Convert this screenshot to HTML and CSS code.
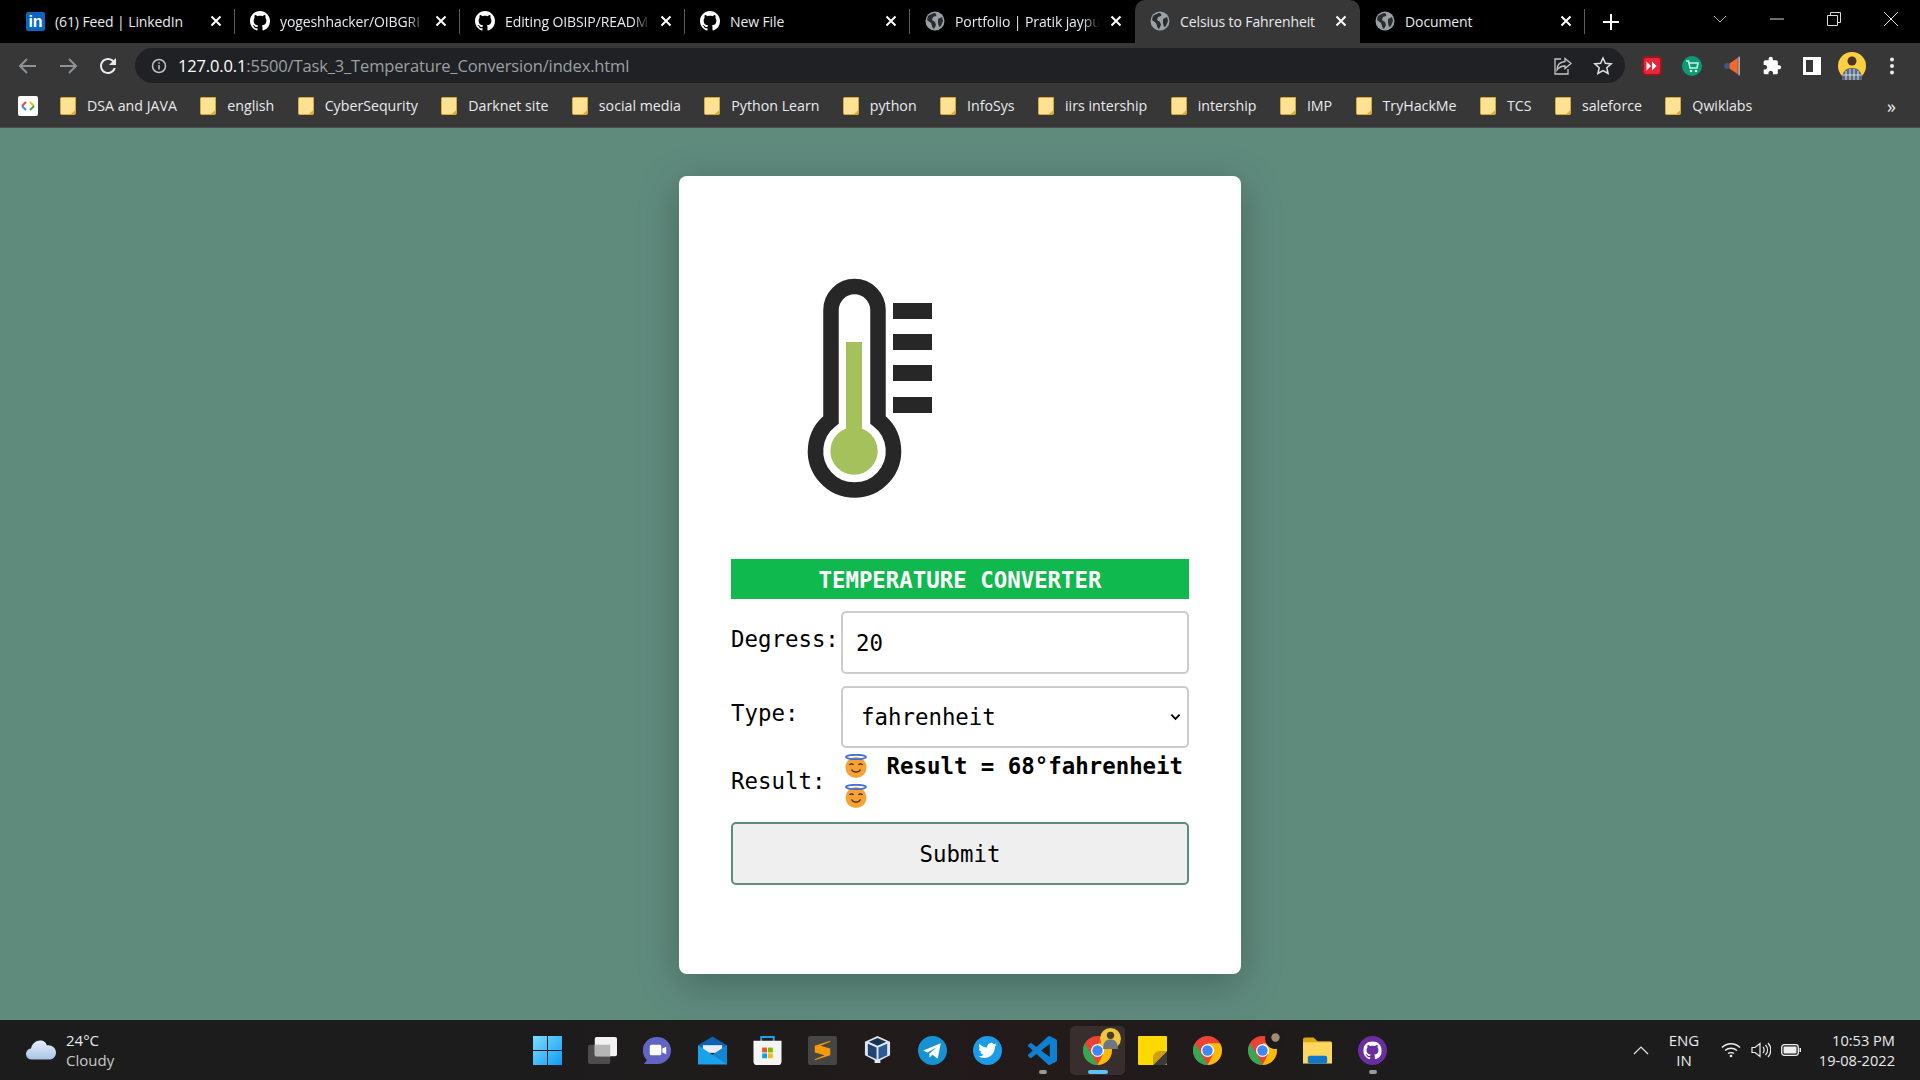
FILE: index.html
```html
<!DOCTYPE html>
<html lang="en">
<head>
  <meta charset="UTF-8">
  <title>Celsius to Fahrenheit</title>
  <link rel="stylesheet" href="styles.css">
</head>
<body>
  <svg class="defs" width="0" height="0">
    <symbol id="gh" viewBox="0 0 16 16"><path fill="currentColor" d="M8 0C3.58 0 0 3.58 0 8c0 3.54 2.29 6.53 5.47 7.59.4.07.55-.17.55-.38 0-.19-.01-.82-.01-1.49-2.01.37-2.53-.49-2.69-.94-.09-.23-.48-.94-.82-1.13-.28-.15-.68-.52-.01-.53.63-.01 1.08.58 1.23.82.72 1.21 1.87.87 2.33.66.07-.52.28-.87.51-1.07-1.78-.2-3.64-.89-3.64-3.95 0-.87.31-1.59.82-2.15-.08-.2-.36-1.02.08-2.12 0 0 .67-.21 2.2.82.64-.18 1.32-.27 2-.27.68 0 1.36.09 2 .27 1.53-1.04 2.2-.82 2.2-.82.44 1.1.16 1.92.08 2.12.51.56.82 1.27.82 2.15 0 3.07-1.87 3.75-3.65 3.95.29.25.54.73.54 1.48 0 1.07-.01 1.93-.01 2.2 0 .21.15.46.55.38A8.013 8.013 0 0016 8c0-4.42-3.58-8-8-8z"/></symbol>
    <symbol id="globe" viewBox="0 0 20 20"><circle cx="10" cy="10" r="9.500" fill="#9aa0a6"/><path fill="#2b2c2e" d="M3 5c2-1 4-3 7-3 1 1 2 2 1 3L8 6 7 9l3 2 1 3-2 4c-2-1-2-4-3-6L2 9zM13 8l4-2 1 4-2 5-2 1-1-4z"/></symbol>
    <symbol id="x" viewBox="0 0 16 16"><path stroke="#fff" stroke-width="2" d="M3.500 3.500l9 9M12.500 3.500l-9 9"/></symbol>
    <symbol id="folder" viewBox="0 0 16 18"><path fill="#fde293" stroke="#d9a93a" d="M.5 1.500a1 1 0 011-1h9l5 0v16a1 1 0 01-1 1h-13a1 1 0 01-1-1z"/><path fill="#d9a93a" d="M11 17l4.500-4v4z"/></symbol>
    <symbol id="angel" viewBox="0 0 22 24"><circle cx="11" cy="13.500" r="10.500" fill="#f6a235"/><ellipse cx="11" cy="3" rx="10" ry="2.200" fill="none" stroke="#3f6fd8" stroke-width="1.800"/><path fill="none" stroke="#3d2a14" stroke-width="1.300" d="M4.500 11c1-1.500 3-1.500 4 0M13.500 11c1-1.500 3-1.500 4 0M6.500 15.500c2 3.500 7 3.500 9 0"/></symbol>
    <symbol id="chrome" viewBox="0 0 28 28"><circle cx="14" cy="14" r="14" fill="#ea4335"/><path fill="#34a853" d="M1.900 7L8 17.500 14.500 28 14 28A14 14 0 011.900 7z"/><path fill="#fbbc04" d="M14 28a14 14 0 0012.100-21H14l5.500 10.500z"/><circle cx="14" cy="14" r="6.300" fill="#fff"/><circle cx="14" cy="14" r="5" fill="#4285f4"/></symbol>
  </svg>

  <header class="tabstrip">
    <div class="tab">
      <span class="linkedin">in</span>
      <span class="tab-title">(61) Feed | LinkedIn</span>
      <svg class="tab-x"><use href="#x"/></svg>
    </div>
    <div class="tab">
      <svg class="fav"><use href="#gh"/></svg>
      <span class="tab-title fade">yogeshhacker/OIBGRI</span>
      <svg class="tab-x"><use href="#x"/></svg>
    </div>
    <div class="tab">
      <svg class="fav"><use href="#gh"/></svg>
      <span class="tab-title fade">Editing OIBSIP/READM</span>
      <svg class="tab-x"><use href="#x"/></svg>
    </div>
    <div class="tab">
      <svg class="fav"><use href="#gh"/></svg>
      <span class="tab-title">New File</span>
      <svg class="tab-x"><use href="#x"/></svg>
    </div>
    <div class="tab no-sep">
      <svg class="fav"><use href="#globe"/></svg>
      <span class="tab-title fade">Portfolio | Pratik jaypu</span>
      <svg class="tab-x"><use href="#x"/></svg>
    </div>
    <div class="tab active">
      <svg class="fav"><use href="#globe"/></svg>
      <span class="tab-title">Celsius to Fahrenheit</span>
      <svg class="tab-x"><use href="#x"/></svg>
    </div>
    <div class="tab">
      <svg class="fav"><use href="#globe"/></svg>
      <span class="tab-title">Document</span>
      <svg class="tab-x"><use href="#x"/></svg>
    </div>
    <svg class="new-tab" viewBox="0 0 16 16"><path stroke="#fff" stroke-width="2" d="M8 0v16M0 8h16"/></svg>
    <div class="window-btns">
      <svg viewBox="0 0 14 14"><path fill="none" stroke="#aaa" d="M1 4l6 6 6-6"/></svg>
      <svg viewBox="0 0 14 14"><path stroke="#ddd" d="M0 7h14"/></svg>
      <svg viewBox="0 0 14 14"><path fill="none" stroke="#ddd" d="M.5 3.500h10v10h-10zM3.500 3.500v-3h10v10h-3"/></svg>
      <svg viewBox="0 0 14 14"><path stroke="#ddd" d="M0 0l14 14M14 0L0 14"/></svg>
    </div>
  </header>

  <div class="toolbar">
    <svg class="tool" viewBox="0 0 24 24"><path fill="none" stroke="#8f9194" stroke-width="2" d="M20 12H5M11 5l-7 7 7 7"/></svg>
    <svg class="tool" viewBox="0 0 24 24"><path fill="none" stroke="#8f9194" stroke-width="2" d="M4 12h15M13 5l7 7-7 7"/></svg>
    <svg class="tool" viewBox="0 0 24 24"><path fill="#e8eaed" d="M17.650 6.350C16.200 4.900 14.210 4 12 4c-4.420 0-7.990 3.580-7.990 8s3.570 8 7.990 8c3.730 0 6.840-2.550 7.730-6h-2.080c-.82 2.330-3.040 4-5.650 4-3.310 0-6-2.690-6-6s2.690-6 6-6c1.660 0 3.140.69 4.220 1.780L13 11h7V4l-2.350 2.350z"/></svg>
    <div class="omnibox">
      <svg class="info" viewBox="0 0 16 16"><circle cx="8" cy="8" r="6.500" fill="none" stroke="#bdc1c6" stroke-width="1.500"/><path stroke="#bdc1c6" stroke-width="1.500" d="M8 7v4.500M8 4.300v1.500"/></svg>
      <span class="url"><b>127.0.0.1</b>:5500/Task_3_Temperature_Conversion/index.html</span>
      <svg class="omni-icon" viewBox="0 0 20 20"><path fill="none" stroke="#c4c7c5" stroke-width="1.300" d="M8 3H2v15h13v-5M12 2.500l6 5-6 5V10c-4 0-6 1-8 4 0-5 3-8 8-8.500z"/></svg>
      <svg class="omni-icon" viewBox="0 0 20 20"><path fill="none" stroke="#e0e0e0" stroke-width="1.500" d="M10 2l2.400 5.300 5.800.6-4.400 3.900 1.300 5.700-5.100-3-5.100 3 1.300-5.700L1.800 7.900l5.800-.6z"/></svg>
    </div>
    <div class="ext-btn"><svg viewBox="0 0 20 20"><rect width="18" height="18" x="1" y="1" rx="3" fill="#e8263a" stroke="#8e1c1c" stroke-width="2"/><path fill="#fff" d="M4.500 5.500l4.500 4.500-4.500 4.500zM10 5.500l4.500 4.500-4.500 4.500z"/></svg></div>
    <div class="ext-btn"><svg viewBox="0 0 20 20"><circle cx="10" cy="10" r="10" fill="#0b9a76"/><path fill="none" stroke="#c9f2e2" stroke-width="1.600" d="M4 5h2.500l1.500 7h7l1-5H7"/><circle cx="9" cy="15" r="1.300" fill="#c9f2e2"/><circle cx="14" cy="15" r="1.300" fill="#c9f2e2"/></svg></div>
    <div class="ext-btn"><svg viewBox="0 0 20 24"><circle cx="4" cy="12" r="3.500" fill="#3c5a80"/><path fill="#f4682c" d="M7 9l10-7v20l-10-7z"/><path stroke="#ddd" stroke-width="1.500" d="M18.500 1v22"/></svg></div>
    <div class="ext-btn"><svg viewBox="0 0 24 24"><path fill="#fff" d="M20.500 11H19V7c0-1.100-.9-2-2-2h-4V3.500C13 2.120 11.880 1 10.500 1S8 2.120 8 3.500V5H4c-1.100 0-1.990.9-1.990 2v3.800H3.500c1.490 0 2.700 1.210 2.700 2.700s-1.210 2.700-2.700 2.700H2V20c0 1.100.9 2 2 2h3.800v-1.500c0-1.490 1.210-2.700 2.700-2.700 1.490 0 2.700 1.210 2.700 2.700V22H17c1.100 0 2-.9 2-2v-4h1.500c1.380 0 2.500-1.120 2.500-2.500S21.880 11 20.500 11z"/></svg></div>
    <div class="ext-btn"><svg viewBox="0 0 20 20"><path fill="#fff" d="M1 1h18v18H1z"/><path fill="#373737" d="M4 4h7v12H4z"/></svg></div>
    <div class="ext-btn"><svg class="avatar" viewBox="0 0 28 28"><circle cx="14" cy="14" r="14" fill="#fbcf3f"/><circle cx="14" cy="9" r="4.500" fill="#4a3326"/><path fill="#5a6a80" d="M4 28c0-9 4-12 10-12s10 3 10 12z"/><path stroke="#d8dde5" d="M8 19v9M12 17v11M16 17v11M20 19v9M5 23h18"/></svg></div>
    <div class="ext-btn"><svg viewBox="0 0 20 20"><circle cx="10" cy="3.500" r="2" fill="#e8eaed"/><circle cx="10" cy="10" r="2" fill="#e8eaed"/><circle cx="10" cy="16.500" r="2" fill="#e8eaed"/></svg></div>
  </div>

  <nav class="bookmarks">
    <svg class="apps" viewBox="0 0 20 20"><rect width="20" height="20" rx="2" fill="#fff"/><path fill="none" stroke="#ea4335" stroke-width="2" d="M8 6l-4 4"/><path fill="none" stroke="#4285f4" stroke-width="2" d="M4 10l4 4"/><path fill="none" stroke="#fbbc04" stroke-width="2" d="M12 6l4 4"/><path fill="none" stroke="#34a853" stroke-width="2" d="M16 10l-4 4"/></svg>
    <a class="bm"><svg><use href="#folder"/></svg>DSA and JAVA</a>
    <a class="bm"><svg><use href="#folder"/></svg>english</a>
    <a class="bm"><svg><use href="#folder"/></svg>CyberSequrity</a>
    <a class="bm"><svg><use href="#folder"/></svg>Darknet site</a>
    <a class="bm"><svg><use href="#folder"/></svg>social media</a>
    <a class="bm"><svg><use href="#folder"/></svg>Python Learn</a>
    <a class="bm"><svg><use href="#folder"/></svg>python</a>
    <a class="bm"><svg><use href="#folder"/></svg>InfoSys</a>
    <a class="bm"><svg><use href="#folder"/></svg>iirs intership</a>
    <a class="bm"><svg><use href="#folder"/></svg>intership</a>
    <a class="bm"><svg><use href="#folder"/></svg>IMP</a>
    <a class="bm"><svg><use href="#folder"/></svg>TryHackMe</a>
    <a class="bm"><svg><use href="#folder"/></svg>TCS</a>
    <a class="bm"><svg><use href="#folder"/></svg>saleforce</a>
    <a class="bm"><svg><use href="#folder"/></svg>Qwiklabs</a>
    <span class="more">»</span>
  </nav>

  <main class="page">
    <div class="card">
      <svg class="thermo" viewBox="0 0 320 290">
        <path fill="none" stroke="#272727" stroke-width="15.500" d="M131 180V70a23.500 23.500 0 0147 0v110a39 39 0 11-47 0z"/>
        <rect x="146" y="102" width="16" height="100" fill="#a4c15c"/>
        <circle cx="154" cy="211" r="23.700" fill="#a4c15c"/>
        <path fill="#272727" d="M193 63h39v16h-39zM193 94h39v16h-39zM193 125h39v16h-39zM193 157h39v16h-39z"/>
      </svg>
      <h1 class="title">TEMPERATURE CONVERTER</h1>
      <div class="row row-degrees">
        <label class="lbl" for="deg">Degress:</label>
        <input class="field" id="deg" type="text" value="20">
      </div>
      <div class="row row-type">
        <label class="lbl" for="type">Type:</label>
        <div class="pick-wrap">
          <select class="field pick" id="type"><option>fahrenheit</option></select>
          <svg class="chevron" viewBox="0 0 12 8"><path fill="none" stroke="#000" stroke-width="2" d="M1.500 1.500L6 6l4.500-4.500"/></svg>
        </div>
      </div>
      <div class="row row-result">
        <span class="lbl">Result:</span>
        <div class="result"><svg class="angel first"><use href="#angel"/></svg> <b>Result = 68°fahrenheit</b> <svg class="angel"><use href="#angel"/></svg></div>
      </div>
      <button class="submit">Submit</button>
    </div>
  </main>

  <footer class="taskbar">
    <div class="weather">
      <svg class="cloud" viewBox="0 0 30 20"><defs><linearGradient id="cl" x1="0" y1="0" x2="0" y2="1"><stop offset="0" stop-color="#e6eefb"/><stop offset="1" stop-color="#a9c4e6"/></linearGradient></defs><path fill="url(#cl)" d="M6 19.500a5.500 5.500 0 01-1-11c1-5 5-8 9-8 4 0 6 2 7 5 4-1 9 2 9 7 0 4-3 7-6 7z"/></svg>
      <div class="weather-text"><span>24°C</span><span class="dim">Cloudy</span></div>
    </div>
    <div class="task-icons">
      <div class="task"><svg viewBox="0 0 29 29"><defs><linearGradient id="w" x1="0" y1="0" x2="1" y2="1"><stop offset="0" stop-color="#7ddcff"/><stop offset="1" stop-color="#0f9bf5"/></linearGradient></defs><path fill="url(#w)" d="M0 0h14v14H0zM15 0h14v14H15zM0 15h14v14H0zM15 15h14v14H15z"/></svg></div>
      <div class="task"><svg viewBox="0 0 30 28"><rect x="0" y="8" width="23" height="20" rx="2" fill="#4d4d4d"/><rect x="7" y="0" width="23" height="20" rx="2" fill="#f2f2f2"/><rect x="7" y="8" width="16" height="12" fill="#b5b5b5"/></svg></div>
      <div class="task"><svg viewBox="0 0 30 30"><path fill="#6264c4" d="M15 1a14 14 0 110 28H1l3-4A14 14 0 0115 1z"/><rect x="7" y="9" width="12" height="11" rx="2" fill="#fff"/><path fill="#fff" d="M20 13l4-2v8l-4-2z"/></svg></div>
      <div class="task"><svg viewBox="0 0 30 29"><path fill="#0a63b4" d="M15 0l15 9v3H0V9z"/><path fill="#e8eef4" d="M5 9h20v8H5z"/><path fill="#1aa3ea" d="M0 9l15 10L30 9v20H0z"/><path fill="#1485d0" d="M15 19l15-10v20z"/></svg></div>
      <div class="task"><svg viewBox="0 0 29 30"><path fill="none" stroke="#1ba3e8" stroke-width="2" d="M8 7V1h13v6"/><path fill="#f5f5f5" d="M0 5h29v21a4 4 0 01-4 4H4a4 4 0 01-4-4z"/><path fill="#f25022" d="M9 12h5v5H9z"/><path fill="#7fba00" d="M15 12h5v5h-5z"/><path fill="#00a4ef" d="M9 18h5v5H9z"/><path fill="#ffb900" d="M15 18h5v5h-5z"/></svg></div>
      <div class="task"><svg viewBox="0 0 30 30"><rect width="30" height="30" rx="2" fill="#454545"/><path fill="#f59a0c" d="M23 5L7 10v7l10 3-10 4v1l16-5v-7l-10-3 10-4z"/></svg></div>
      <div class="task"><svg viewBox="0 0 26 30"><path fill="#dfe6f0" d="M13 0l13 6v14l-10 5v3h-6v-3L0 20V6z"/><path fill="#1f4372" d="M3 8l9 4v12l-9-4z"/><path fill="#2b5a94" d="M14 12l9-4v12l-9 4z"/><path fill="#173355" d="M4 6l9-4 9 4-9 4z"/></svg></div>
      <div class="task"><svg viewBox="0 0 28 28"><circle cx="14" cy="14" r="14" fill="#1791d0"/><path fill="#fff" d="M5 14l17-7-3 15-5-4-3 3v-4l7-6-9 5z"/></svg></div>
      <div class="task"><svg viewBox="0 0 28 28"><circle cx="14" cy="14" r="14" fill="#1c9be8"/><svg x="5" y="5" width="18" height="18" viewBox="0 0 24 24"><path fill="#fff" d="M23.953 4.570a10 10 0 01-2.825.775 4.958 4.958 0 002.163-2.723c-.951.555-2.005.959-3.127 1.184a4.920 4.920 0 00-8.384 4.482C7.690 8.095 4.067 6.130 1.640 3.162a4.822 4.822 0 00-.666 2.475c0 1.710.87 3.213 2.188 4.096a4.904 4.904 0 01-2.228-.616v.06a4.923 4.923 0 003.946 4.827 4.996 4.996 0 01-2.212.085 4.936 4.936 0 004.604 3.417 9.867 9.867 0 01-6.102 2.105c-.39 0-.779-.023-1.170-.067a13.995 13.995 0 007.557 2.209c9.053 0 13.998-7.496 13.998-13.985 0-.21 0-.42-.015-.63A9.935 9.935 0 0024 4.590z"/></svg></svg></div>
      <div class="task open"><svg viewBox="0 0 24 24"><path fill="#0e7fd1" d="M23.150 2.587L18.210.21a1.494 1.494 0 00-1.705.29l-9.460 8.630-4.120-3.128a.999.999 0 00-1.276.057L.327 7.261A1 1 0 00.326 8.740L3.899 12 .326 15.260a1 1 0 00.001 1.479L1.650 17.940a.999.999 0 001.276.057l4.120-3.128 9.460 8.630a1.492 1.492 0 001.704.29l4.942-2.377A1.500 1.500 0 0024 20.060V3.939a1.500 1.500 0 00-.85-1.352zm-5.146 14.861L10.826 12l7.178-5.448v10.896z"/></svg></div>
      <div class="task current"><svg class="chrome"><use href="#chrome"/></svg><svg class="badge" viewBox="0 0 20 20"><circle cx="10" cy="10" r="10" fill="#f0c63c"/><circle cx="10" cy="7" r="3.500" fill="#4a3d30"/><path fill="#6d7682" d="M3 20c0-7 3-9 7-9s7 2 7 9z"/></svg></div>
      <div class="task"><svg viewBox="0 0 27 27"><rect width="27" height="27" rx="1" fill="#fdd900"/><path fill="#3c3c3c" d="M14 27l13-13v11a2 2 0 01-2 2z"/><path fill="#d79b12" d="M14 27v-7a6 6 0 016-6h7z"/></svg></div>
      <div class="task"><svg class="chrome"><use href="#chrome"/></svg></div>
      <div class="task"><svg class="chrome"><use href="#chrome"/></svg><svg class="badge" viewBox="0 0 20 20"><circle cx="10" cy="10" r="10" fill="#1c1a1a"/><circle cx="10" cy="9" r="4" fill="#a08a78"/></svg></div>
      <div class="task"><svg viewBox="0 0 30 27"><path fill="#e0a513" d="M0 2a2 2 0 012-2h9l4 4h13a2 2 0 012 2v4H0z"/><path fill="#fdd75e" d="M0 5h30v22H0z"/><rect x="5" y="19" width="20" height="8" rx="2" fill="#0f78c9"/></svg></div>
      <div class="task open"><svg viewBox="0 0 28 28"><circle cx="14" cy="14" r="14" fill="#6a2e9e"/><svg x="5" y="5" width="18" height="18" class="gh-white"><use href="#gh"/></svg></svg></div>
    </div>
    <div class="tray">
      <svg class="caret" viewBox="0 0 16 10"><path fill="none" stroke="#e6e6e6" stroke-width="1.200" d="M1 9l7-7 7 7"/></svg>
      <div class="lang"><span>ENG</span><span>IN</span></div>
      <svg class="tray-icon" viewBox="0 0 20 16"><path fill="none" stroke="#eee" stroke-width="1.400" d="M1 5.500c5-5 13-5 18 0M4 8.500c3.500-3 8.500-3 12 0M7 11.500c1.500-1 4.500-1 6 0"/><circle cx="10" cy="14" r="1.300" fill="#eee"/></svg>
      <svg class="tray-icon" viewBox="0 0 20 16"><path fill="none" stroke="#eee" stroke-width="1.200" d="M1 5.500h3l5-4v13l-5-4H1zM12 5c1.500 1.500 1.500 4.500 0 6M14.500 3c2.700 3 2.700 7 0 10M17 1c3.700 4 3.700 10 0 14"/></svg>
      <svg class="tray-icon" viewBox="0 0 20 12"><rect x=".7" y=".7" width="16.600" height="10.600" rx="2.500" fill="none" stroke="#eee" stroke-width="1.300"/><rect x="2.500" y="2.500" width="13" height="7" rx="1" fill="#eee"/><path fill="#eee" d="M18.500 4h1.500v4h-1.500z"/></svg>
      <div class="clock"><span>10:53 PM</span><span>19-08-2022</span></div>
    </div>
  </footer>
</body>
</html>
```

FILE: styles.css
```css
* {
  box-sizing: border-box;
}

body {
  margin: 0;
  width: 1920px;
  height: 1080px;
  overflow: hidden;
  display: flex;
  flex-direction: column;
  font-family: 'Open Sans', 'Noto Sans', sans-serif;
  color: #e8eaed;
  background-color: #5f8b7d;
}

.defs {
  position: absolute;
}

/* Tab strip */
.tabstrip {
  height: 43px;
  flex: none;
  display: flex;
  padding-left: 10px;
  background-color: #000;
}

.tab {
  position: relative;
  width: 225px;
  display: flex;
  align-items: center;
  padding: 0 11px 1px 15px;
  font-size: 14px;
  letter-spacing: -0.1px;
  color: #e8eaed;
}

.tab::after {
  content: '';
  position: absolute;
  right: 0;
  top: 9px;
  height: 25px;
  width: 1px;
  background-color: #5c5c5c;
}

.tab.no-sep::after,
.tab.active::after {
  display: none;
}

.tab.active {
  background-color: #373737;
  border-radius: 10px 10px 0 0;
}

.linkedin {
  width: 19px;
  height: 19px;
  flex: none;
  margin-left: 1px;
  border-radius: 2px;
  background-color: #0a66c2;
  color: #fff;
  font-family: 'Liberation Sans', sans-serif;
  font-weight: bold;
  font-size: 16px;
  line-height: 19px;
  text-align: center;
}

.fav {
  width: 20px;
  height: 20px;
  flex: none;
  color: #fff;
}

.tab-title {
  flex: 1;
  min-width: 0;
  margin-left: 10px;
  white-space: nowrap;
}

.tab-title.fade {
  -webkit-mask-image: linear-gradient(to right, #000 88%, transparent 100%);
  mask-image: linear-gradient(to right, #000 88%, transparent 100%);
}

.tab-x {
  width: 16px;
  height: 16px;
  flex: none;
  margin-left: 8px;
}

.new-tab {
  width: 16px;
  height: 16px;
  margin: 14px 0 0 18px;
}

.window-btns {
  display: flex;
  margin-left: auto;
  padding-right: 22px;
  gap: 43px;
  align-items: flex-start;
  padding-top: 12px;
}

.window-btns svg {
  width: 14px;
  height: 14px;
}

/* Toolbar */
.toolbar {
  height: 40px;
  flex: none;
  display: flex;
  align-items: center;
  padding: 5px 8px 0 8px;
  background-color: #373737;
}

.tool {
  width: 24px;
  height: 24px;
  margin: 0 8px;
}

.omnibox {
  flex: 1;
  height: 35px;
  margin: 0 7px;
  display: flex;
  align-items: center;
  padding: 0 12px 0 16px;
  border-radius: 18px;
  background-color: #202124;
}

.info {
  width: 16px;
  height: 16px;
}

.url {
  flex: 1;
  margin-left: 11px;
  font-size: 16.5px;
  letter-spacing: -0.15px;
  color: #9aa0a6;
  white-space: nowrap;
}

.url b {
  font-weight: normal;
  color: #fff;
}

.omni-icon {
  width: 20px;
  height: 20px;
  margin-left: 20px;
}

.ext-btn {
  width: 40px;
  height: 35px;
  display: flex;
  align-items: center;
  justify-content: center;
}

.ext-btn svg {
  width: 20px;
  height: 20px;
}

.ext-btn .avatar {
  width: 28px;
  height: 28px;
}

/* Bookmarks */
.bookmarks {
  height: 45px;
  flex: none;
  display: flex;
  align-items: center;
  gap: 23.4px;
  padding-left: 18px;
  padding-top: 1px;
  border-bottom: 1px solid #4a4a4a;
  background-color: #373737;
  font-size: 14.2px;
}

.apps {
  width: 20px;
  height: 20px;
  margin-right: -1.400px;
}

.bm {
  display: flex;
  align-items: center;
  gap: 11px;
  white-space: nowrap;
}

.bm svg {
  width: 16px;
  height: 18px;
}

.more {
  margin-left: auto;
  padding-right: 24px;
  font-size: 18px;
}

/* Page */
.page {
  flex: 1;
  padding-top: 48px;
  display: flex;
  flex-direction: column;
  align-items: center;
}

.card {
  width: 562px;
  height: 798px;
  padding: 64px 52px 0;
  border-radius: 8px;
  background-color: #fff;
  box-shadow: 0 10px 40px rgba(0, 0, 0, 0.25);
  font-family: 'DejaVu Sans Mono', 'Liberation Mono', monospace;
  font-size: 22.4px;
  color: #000;
}

.thermo {
  display: block;
  width: 320px;
  height: 290px;
  margin: 0 0 29px -31px;
}

.title {
  height: 40px;
  margin: 0 0 12px;
  background-color: #10b94d;
  color: #fff;
  font-size: 22.4px;
  font-weight: bold;
  line-height: 42px;
  text-align: center;
}

.row {
  display: flex;
}

.lbl {
  width: 110px;
  flex: none;
}

.row-degrees {
  height: 63px;
  margin-bottom: 12px;
  align-items: center;
}

.row-degrees .lbl,
.row-type .lbl {
  margin-top: -8px;
}

.row-type {
  height: 62px;
  align-items: center;
}

.row-result {
  height: 62px;
  padding-top: 4px;
  margin-bottom: 12px;
  align-items: center;
}

.field {
  flex: 1;
  height: 100%;
  min-width: 0;
  padding: 0 16px 0 13px;
  border: 2px solid #ccc;
  border-radius: 5px;
  background-color: #fff;
  font-family: inherit;
  font-size: 22.4px;
  color: #000;
}

.pick-wrap {
  position: relative;
  flex: 1;
  height: 100%;
}

.pick {
  display: block;
  width: 100%;
  padding-left: 18px;
  -webkit-appearance: none;
  appearance: none;
}

.chevron {
  position: absolute;
  right: 8px;
  top: 27px;
  width: 11px;
  height: 8px;
  pointer-events: none;
}

.result {
  flex: 1;
  padding-left: 4px;
  line-height: 30px;
}

.angel {
  width: 22px;
  height: 24px;
  vertical-align: -4px;
}

.angel.first {
  margin-right: 6px;
}

.submit {
  display: block;
  width: 100%;
  height: 63px;
  border: 2px solid #5f8b7d;
  border-radius: 5px;
  background-color: #efefef;
  font-family: inherit;
  font-size: 22.4px;
  color: #000;
}

/* Taskbar */
.taskbar {
  height: 60px;
  flex: none;
  display: grid;
  grid-template-columns: 1fr auto 1fr;
  align-items: center;
  background-color: #1c1c1c;
  background-image: linear-gradient(to right, #1c1c1c 25%, #231a1a 55%, #1c1c1c 75%);
  font-size: 15px;
}

.weather {
  display: flex;
  align-items: center;
  padding-left: 26px;
}

.cloud {
  width: 30px;
  height: 20px;
}

.weather-text,
.lang,
.clock {
  display: flex;
  flex-direction: column;
  line-height: 20px;
}

.weather-text {
  margin-left: 10px;
}

.dim {
  color: #c8c8c8;
}

.task-icons {
  display: flex;
}

.task {
  position: relative;
  width: 55px;
  height: 49px;
  display: flex;
  align-items: center;
  justify-content: center;
}

.task > svg {
  width: 29px;
  height: 29px;
}

.task.current {
  border-radius: 5px;
  background-color: #382e2e;
}

.task.current::after,
.task.open::after {
  content: '';
  position: absolute;
  bottom: 1px;
  left: 50%;
  width: 8px;
  height: 4px;
  margin-left: -4px;
  border-radius: 2px;
  background-color: #9a9a9a;
}

.task.current::after {
  width: 20px;
  margin-left: -10px;
  background-color: #5cc1f7;
}

.task > .badge {
  position: absolute;
  right: 4px;
  top: 2px;
  width: 21px;
  height: 21px;
}

.gh-white {
  color: #fff;
}

.tray {
  display: flex;
  align-items: center;
  justify-content: flex-end;
  padding-right: 25px;
}

.caret {
  width: 16px;
  height: 10px;
}

.lang {
  width: 36px;
  margin: 0 19px 0 17px;
  align-items: center;
}

.tray-icon {
  width: 20px;
  height: 16px;
  margin-right: 10px;
}

.clock {
  margin-left: 8px;
  width: 76px;
  align-items: flex-end;
  white-space: nowrap;
  font-size: 14.6px;
}
```
